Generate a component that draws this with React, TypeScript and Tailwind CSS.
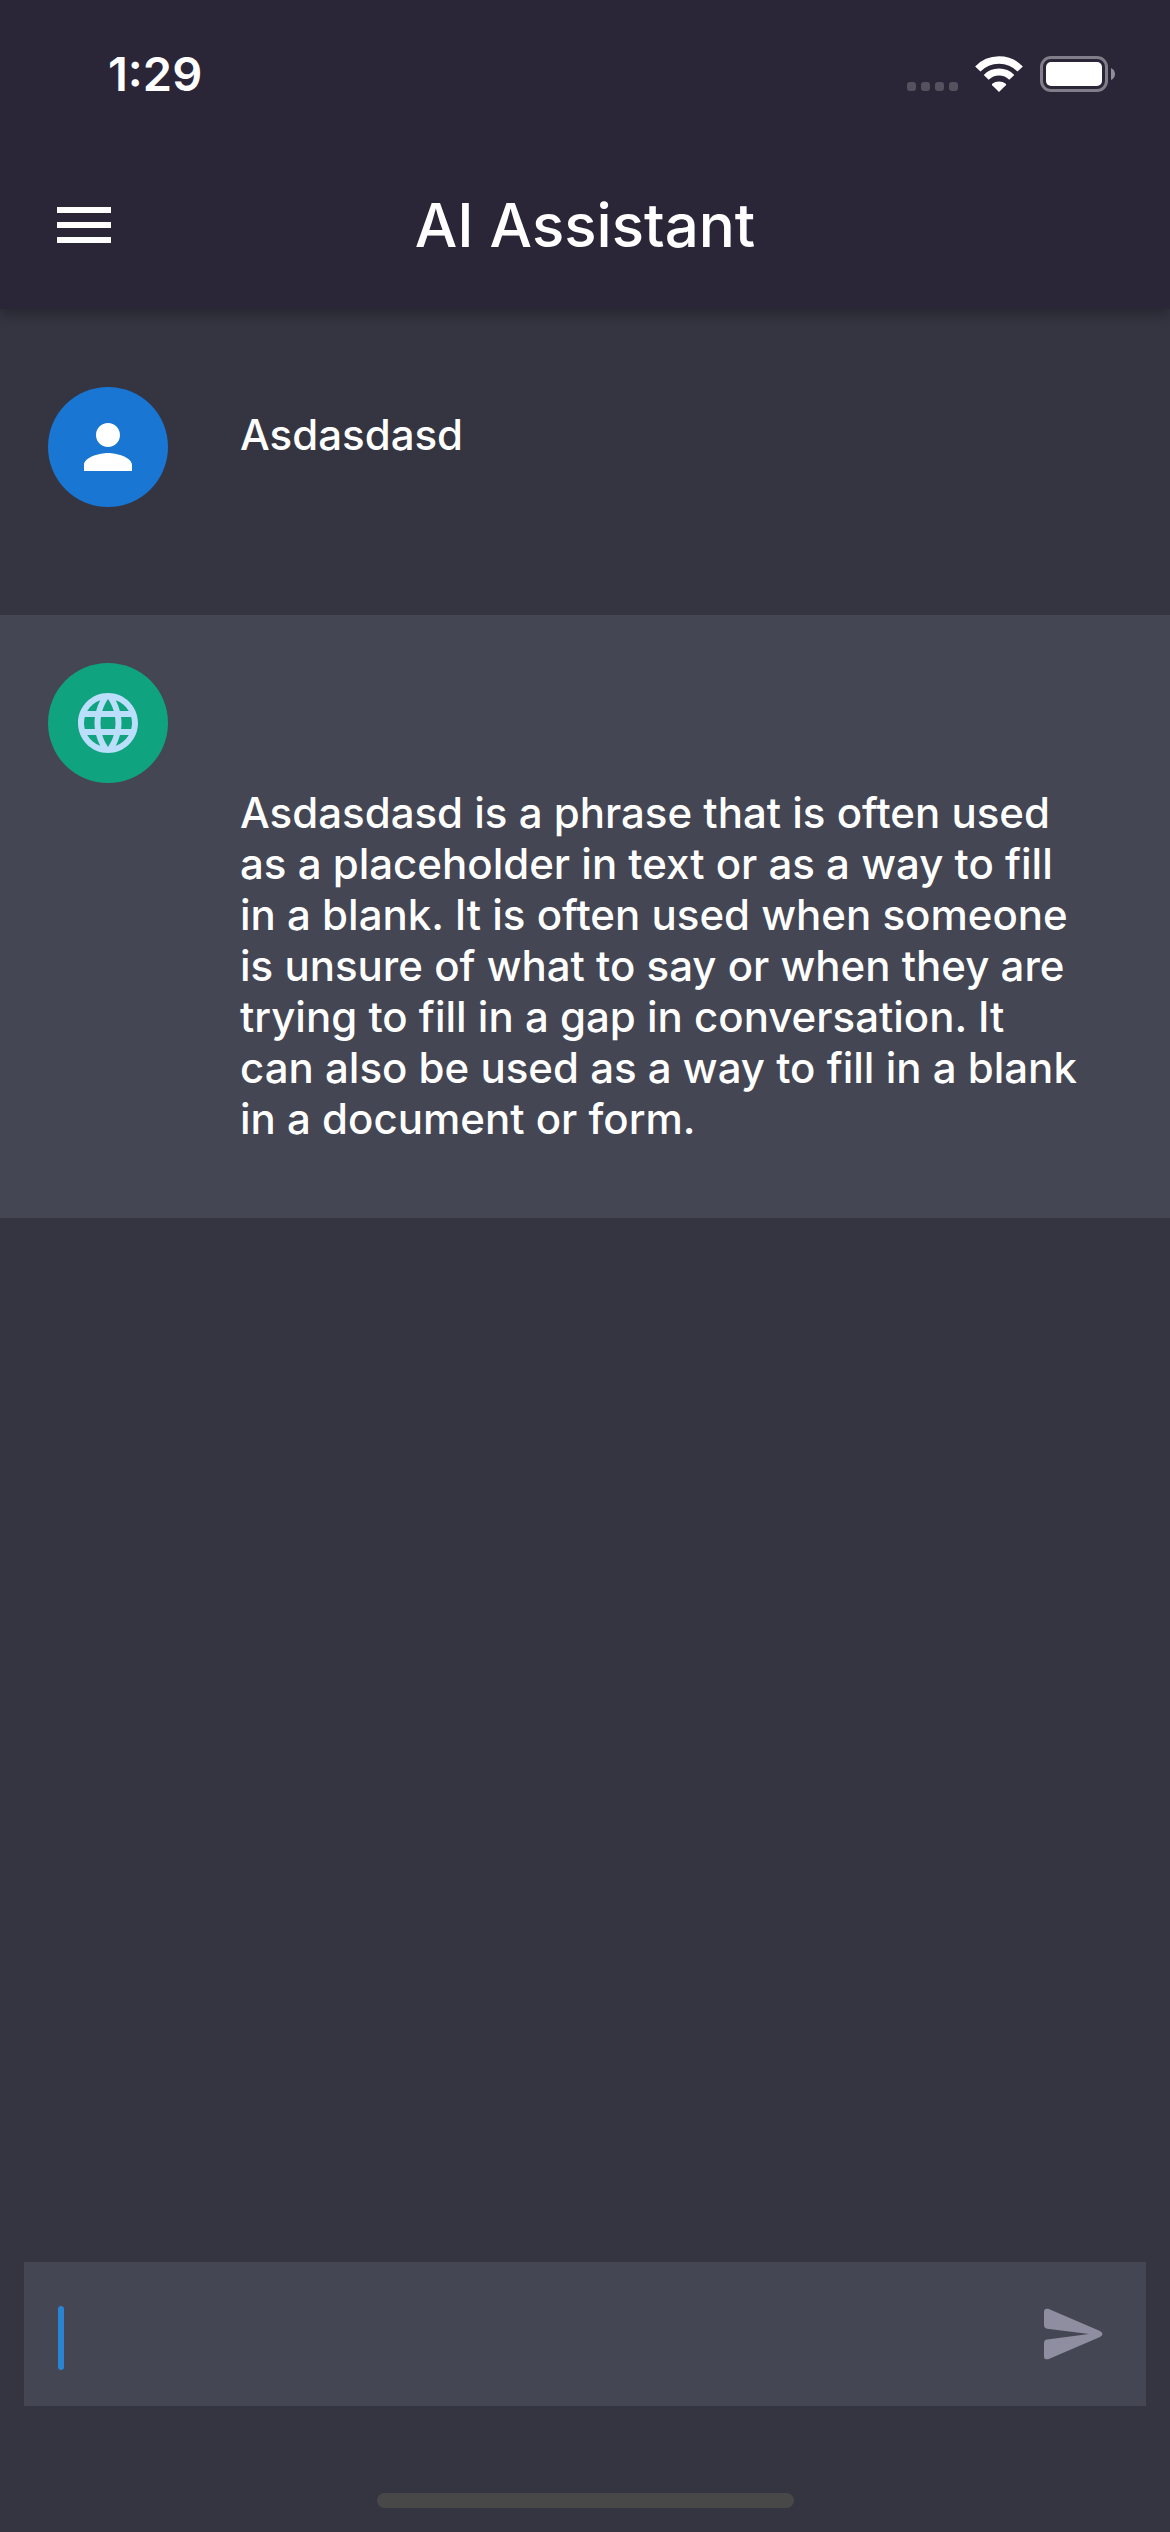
import type { ReactNode } from "react";

function StatusBar() {
  return (
    <div className="flex h-[148px] items-center justify-between pr-[54px] pl-[108px]">
      <time className="text-[47px] leading-[56px] font-semibold">1:29</time>
      <div className="flex items-center gap-[17px]">
        <div className="flex gap-[5px] pt-[25px]">
          <span className="size-[9px] rounded-[3px] bg-[#55515f]" />
          <span className="size-[9px] rounded-[3px] bg-[#55515f]" />
          <span className="size-[9px] rounded-[3px] bg-[#55515f]" />
          <span className="size-[9px] rounded-[3px] bg-[#55515f]" />
        </div>
        <svg className="h-[36px] w-[48px]" viewBox="0 0 48 36" fill="none" aria-label="Wi-Fi">
          <path d="M2.8 13 A29.5 29.5 0 0 1 45.2 13" stroke="white" strokeWidth="7.4" />
          <path d="M11.2 21.4 A18 18 0 0 1 36.8 21.4" stroke="white" strokeWidth="7" />
          <path d="M24 36 L17.2 29.2 A1 1 0 0 1 17.2 27.8 Q20.2 25.4 24 25.4 Q27.8 25.4 30.8 27.8 A1 1 0 0 1 30.8 29.2 Z" fill="white" />
        </svg>
        <svg className="h-[36px] w-[76px]" viewBox="0 0 76 36" fill="none" aria-label="Battery">
          <rect x="1.5" y="1.5" width="65" height="33" rx="9.5" stroke="#817e89" strokeWidth="3" />
          <rect x="6" y="6" width="56" height="24" rx="5" fill="white" />
          <path d="M71 12 Q75 14 75 18 Q75 22 71 24 Z" fill="#918f99" />
        </svg>
      </div>
    </div>
  );
}

function Header() {
  return (
    <header className="relative bg-[#2a2638] shadow-[0_6px_12px_rgba(0,0,0,0.28)]">
      <StatusBar />
      <div className="grid h-[161px] grid-cols-[1fr_auto_1fr] items-center px-[48px] pb-[7px]">
        <button type="button" aria-label="Open menu" className="w-[72px]">
          <svg className="size-[72px]" viewBox="0 0 24 24" fill="white" aria-hidden="true">
            <path d="M3 18h18v-2H3v2zm0-5h18v-2H3v2zm0-7v2h18V6H3z" />
          </svg>
        </button>
        <h1 className="text-[60px] leading-[72px] font-medium">AI Assistant</h1>
      </div>
    </header>
  );
}

function Avatar({ kind }: { kind: "user" | "bot" }) {
  if (kind === "user") {
    return (
      <div className="flex size-[120px] shrink-0 items-center justify-center rounded-full bg-[#1976d2]">
        <svg className="size-[72px]" viewBox="0 0 24 24" fill="white" aria-label="You">
          <path d="M12 12c2.21 0 4-1.79 4-4s-1.79-4-4-4-4 1.79-4 4 1.79 4 4 4zm0 2c-2.67 0-8 1.34-8 4v2h16v-2c0-2.66-5.33-4-8-4z" />
        </svg>
      </div>
    );
  }
  return (
    <div className="flex size-[120px] shrink-0 items-center justify-center rounded-full bg-[#10a37f]">
      <svg className="size-[72px]" viewBox="0 0 24 24" fill="#bbdefb" aria-label="Assistant">
        <path d="M11.99 2C6.47 2 2 6.48 2 12s4.47 10 9.99 10C17.52 22 22 17.52 22 12S17.52 2 11.99 2zm6.93 6h-2.95c-.32-1.25-.78-2.45-1.38-3.56 1.84.63 3.37 1.91 4.33 3.56zM12 4.04c.83 1.2 1.48 2.53 1.91 3.96h-3.82c.43-1.43 1.08-2.76 1.91-3.96zM4.26 14C4.1 13.36 4 12.69 4 12s.1-1.36.26-2h3.38c-.08.66-.14 1.32-.14 2s.06 1.34.14 2H4.26zm.82 2h2.95c.32 1.25.78 2.45 1.38 3.56-1.84-.63-3.37-1.9-4.33-3.56zm2.95-8H5.08c.96-1.66 2.49-2.93 4.33-3.56C8.81 5.55 8.35 6.75 8.03 8zM12 19.96c-.83-1.2-1.48-2.53-1.91-3.96h3.82c-.43 1.43-1.08 2.76-1.91 3.96zM14.34 14H9.66c-.09-.66-.16-1.32-.16-2s.07-1.35.16-2h4.68c.09.65.16 1.32.16 2s-.07 1.34-.16 2zm.25 5.56c.6-1.11 1.06-2.31 1.38-3.56h2.95c-.96 1.65-2.49 2.93-4.33 3.56zM16.36 14c.08-.66.14-1.32.14-2s-.06-1.34-.14-2h3.38c.16.64.26 1.31.26 2s-.1 1.36-.26 2h-3.38z" />
      </svg>
    </div>
  );
}

function Message({ kind, className, children }: { kind: "user" | "bot"; className: string; children: ReactNode }) {
  return (
    <article className={"flex items-start gap-[72px] pr-[84px] pl-[48px] " + className}>
      <Avatar kind={kind} />
      <p className="min-w-0 flex-1 pt-[22px] pb-[26px] text-[42px] leading-[51px] font-medium whitespace-pre-line [font-variant-ligatures:none]">
        {children}
      </p>
    </article>
  );
}

export default function App() {
  return (
    <div className="flex min-h-screen flex-col bg-[#343541] font-['Inter',sans-serif] text-white">
      <Header />
      <main className="flex-1">
        <Message kind="user" className="pt-[78px] pb-[108px]">
          Asdasdasd
        </Message>
        <Message kind="bot" className="bg-[#444654] py-[48px]">
          {"\n\nAsdasdasd is a phrase that is often used as a placeholder in text or as a way to fill in a blank. It is often used when someone is unsure of what to say or when they are trying to fill in a gap in conversation. It can also be used as a way to fill in a blank in a document or form."}
        </Message>
      </main>
      <form className="mx-[24px] flex h-[144px] items-center bg-[#444654] pr-[36px] pl-[34px]" onSubmit={(e) => e.preventDefault()}>
        <span className="mt-[8px] h-[64px] w-[6px] rounded-full bg-[#2a84d2]" />
        <input
          type="text"
          aria-label="Message"
          className="h-full min-w-0 flex-1 bg-transparent text-[42px] outline-none"
        />
        <button type="submit" aria-label="Send" className="flex size-[74px] items-center justify-center">
          <svg className="h-[52px] w-[60px]" viewBox="0 0 60 52" fill="#8e8ea0" aria-hidden="true">
            <path d="M5.2 .8 L57 23 Q62 26 57 29 L5.2 51.2 Q1 52 1 48.5 V35 Q1 31.8 4.2 31.4 L46 26 L4.2 20.7 Q1 20.2 1 17 V4 Q1 0 5.2 .8 Z" />
          </svg>
        </button>
      </form>
      <footer className="flex justify-center pt-[87px] pb-[24px]">
        <span className="h-[15px] w-[417px] rounded-full bg-[#484848]" />
      </footer>
    </div>
  );
}
